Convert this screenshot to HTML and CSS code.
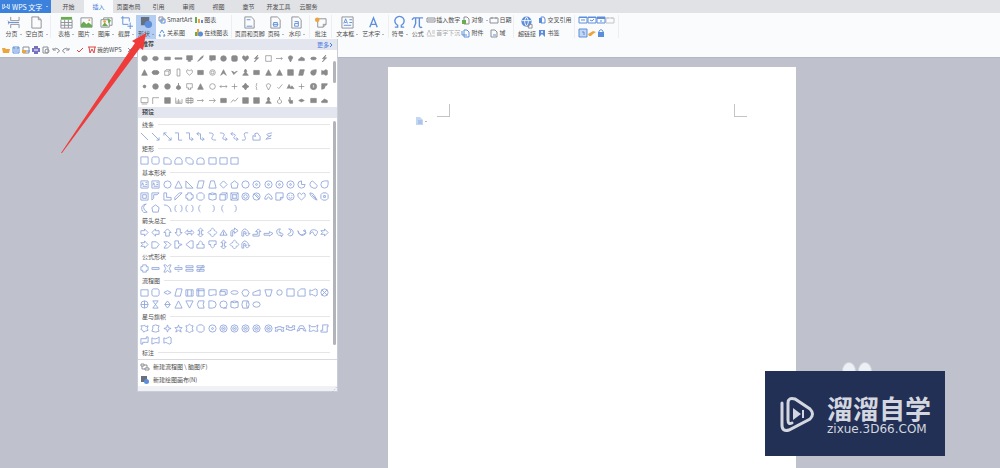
FILE: index.html
```html
<!DOCTYPE html>
<html lang="zh-CN">
<head>
<meta charset="utf-8">
<title>WPS 文字</title>
<link rel="stylesheet" href="styles.css">
</head>
<body>
<div class="app">
  <header class="top">
    <nav class="tabs">
      <button class="brand"><svg class="brand-logo" viewBox="0 0 10 8"><path d="M1 1v6l4-3 4 3V1M3 1v3M7 1v3"/></svg><span>WPS 文字</span><i class="caret"></i></button>
      <button class="tab">开始</button>
      <button class="tab active">插入</button>
      <button class="tab">页面布局</button>
      <button class="tab">引用</button>
      <button class="tab">审阅</button>
      <button class="tab">视图</button>
      <button class="tab">章节</button>
      <button class="tab">开发工具</button>
      <button class="tab">云服务</button>
    </nav>

    <div class="ribbon">
      <div class="group wide">
        <button class="big"><svg viewBox="0 0 14 14"><path class="g" d="M4 1v4h9V1M4 13V9h9v4"/><path class="b" d="M1 7h12M1 5l2 2-2 2"/></svg><span>分页<i class="caret"></i></span></button>
        <button class="big"><svg viewBox="0 0 14 14"><path class="g" d="M2 1h7l3 3v9H2zM9 1v3h3"/></svg><span>空白页<i class="caret"></i></span></button>
      </div>
      <div class="group media">
        <button class="big"><svg viewBox="0 0 14 14"><path class="gr" d="M1 1h12v3H1z"/><path class="g" d="M1 4v9h12V4M1 7h12M1 10h12M5 4v9M9 4v9"/></svg><span>表格<i class="caret"></i></span></button>
        <button class="big"><svg viewBox="0 0 14 14"><path class="g" d="M1 2h12v10H1z"/><path class="gr" d="M1 12V9l3-3 3 3 2-2 4 3v2z"/><circle class="or" cx="10" cy="4.500" r="1"/></svg><span>图片<i class="caret"></i></span></button>
        <button class="big"><svg viewBox="0 0 14 14"><path class="g" d="M1 4h9v8H1zM4 4V2h9v8h-3"/><path class="gr" d="M2 11l3-4 4 4zM8 2l4 3-3 3z"/><circle class="or" cx="5" cy="6" r="1.500"/></svg><span>图库<i class="caret"></i></span></button>
        <button class="big"><svg viewBox="0 0 14 14"><path class="b" d="M3 0v9h6M1 2h9v4M11 7v7M8 11h6"/></svg><span>截屏<i class="caret"></i></span></button>
        <button class="big pressed"><svg viewBox="0 0 14 14"><path class="dk" d="M1 1h9v4L5 10H1z"/><circle class="bl" cx="9" cy="9" r="4"/></svg><span>形状<i class="caret"></i></span></button>
        <div class="stack">
          <button class="small"><svg viewBox="0 0 8 8"><path class="g" d="M1 1h4v4H1z"/><path class="b" d="M3 3h4v4H3z"/></svg>SmartArt</button>
          <button class="small"><svg viewBox="0 0 8 8"><path class="b" d="M2 4l2-3 2 3M6 5l1 2H5M3 7H1l1-2"/></svg>关系图</button>
        </div>
        <div class="stack">
          <button class="small"><svg viewBox="0 0 8 8"><path class="gr" d="M0 1h2v6H0z"/><path class="or" d="M3 3h2v4H3z"/><path class="bl" d="M6 4h2v3H6z"/></svg>图表</button>
          <button class="small"><svg viewBox="0 0 8 8"><path class="gr" d="M0 3h2v4H0z"/><path class="or" d="M2 0h2v7H2z"/><circle class="bl" cx="5.500" cy="5" r="2.500"/></svg>在线图表</button>
        </div>
      </div>
      <div class="group">
        <button class="big w30"><svg viewBox="0 0 14 14"><path class="g" d="M2 1h7l3 3v9H2z"/><path class="b" d="M4 4h4M4 11h6"/></svg><span>页眉和页脚</span></button>
        <button class="big w21"><svg viewBox="0 0 14 14"><path class="g" d="M2 1h7l3 3v9H2z"/><path class="b" d="M5 7h4v4H5zM4 9h6"/></svg><span>页码<i class="caret"></i></span></button>
        <button class="big w21"><svg viewBox="0 0 14 14"><path class="g" d="M2 1h7l3 3v9H2z"/><path class="b" d="M5 6h4v5H5V8h4"/></svg><span>水印<i class="caret"></i></span></button>
      </div>
      <div class="group">
        <button class="big w17"><svg viewBox="0 0 14 14"><path class="g" d="M4 3h9v6l-3 3H4zM13 9h-3v3"/><circle class="or" cx="3.500" cy="4" r="2.500"/></svg><span>批注</span></button>
      </div>
      <div class="group">
        <button class="big w27"><svg viewBox="0 0 14 14"><path class="g" d="M1 1h12v12H1z"/><path class="b" d="M3 8l2-5 2 5M4 7h2M9 4h3M9 7h3M3 10h8"/></svg><span>文本框<i class="caret"></i></span></button>
        <button class="big w27"><svg viewBox="0 0 14 14"><path class="b thick" d="M3 12L7 2l4 10M4 9h6"/></svg><span>艺术字<i class="caret"></i></span></button>
      </div>
      <div class="group symbols">
        <button class="big w19"><svg viewBox="0 0 14 14"><path class="b thick" d="M2 12h3V10A5 5 0 1 1 9 10v2h3"/></svg><span>符号<i class="caret"></i></span></button>
        <button class="big w17"><svg viewBox="0 0 14 14"><path class="b thick" d="M1 4l2-2h10M5 2v6l-2 5M9 2v9q1 2 3 1"/></svg><span>公式</span></button>
        <div class="stack">
          <button class="small"><svg viewBox="0 0 8 8"><path class="g" d="M0 2h8v4H0zM2 3v2M4 3v2M6 3v2"/></svg>插入数字</button>
          <button class="small off" disabled><svg viewBox="0 0 8 8"><path class="g" d="M0 6l2-5 2 5M5 2h3M5 4h3M0 7h8"/></svg>首字下沉</button>
        </div>
        <div class="stack">
          <button class="small"><svg viewBox="0 0 8 8"><path class="g" d="M2 1h3l2 2v5H2z"/><path class="gr" d="M0 4h4v4H0z"/></svg>对象<i class="caret"></i></button>
          <button class="small"><svg viewBox="0 0 8 8"><path class="b" d="M2 1h3l2 2v5H2zM0 2v4h5"/></svg>附件</button>
        </div>
        <div class="stack">
          <button class="small"><svg viewBox="0 0 8 8"><path class="g" d="M0 2h8v5H0zM2 1v2M6 1v2"/></svg>日期</button>
          <button class="small"><svg viewBox="0 0 8 8"><path class="g" d="M1 1h4l2 2v5H1z"/><path class="b" d="M3 6h3"/></svg>域</button>
        </div>
      </div>
      <div class="group">
        <button class="big w21"><svg viewBox="0 0 14 14"><circle class="bl" cx="7" cy="6" r="5.500"/><path class="w" d="M2 5h10M7 1q-4 5 0 10M7 1q4 5 0 10"/><path class="g" d="M7 11h3M9 9h4v4H9z"/></svg><span>超链接</span></button>
        <div class="stack">
          <button class="small"><svg viewBox="0 0 8 8"><path class="bl" d="M1 2h3v5H1z"/><path class="b" d="M3 1h3l1 2v4H3z"/></svg>交叉引用</button>
          <button class="small"><svg viewBox="0 0 8 8"><path class="bl" d="M1 1h6v7L4 5 1 8z"/><circle class="wf" cx="4" cy="3" r="1"/></svg>书签</button>
        </div>
      </div>
      <div class="group controls">
        <button aria-label="文本域"><svg viewBox="0 0 8 8"><path class="b" d="M0 1h8v6H0zM2 4h4"/><path class="bl" d="M0 1h8v1H0z"/></svg></button>
        <button aria-label="复选框"><svg viewBox="0 0 8 8"><path class="b" d="M0 1h8v6H0zM2 4l2 1 2-2"/><path class="bl" d="M0 1h8v1H0z"/></svg></button>
        <button aria-label="下拉框"><svg viewBox="0 0 8 8"><path class="b" d="M0 1h8v6H0zM3 5h2"/><path class="bl" d="M0 1h8v2H0z"/></svg></button>
        <button aria-label="重置" class="off"><svg viewBox="0 0 8 8"><path class="g" d="M0 2h8v5H0zM2 1v2M6 1v2"/></svg></button>
        <button aria-label="底纹"><svg viewBox="0 0 8 8"><path class="lb" d="M0 0h8v8H0z"/><path class="b" d="M0 0h8v8H0zM3 3h2v3"/></svg></button>
        <button aria-label="清除"><svg viewBox="0 0 8 8"><path class="or" d="M0 5l5-3 3 1-3 2-2 2H1z"/></svg></button>
        <button aria-label="锁定"><svg viewBox="0 0 8 8"><path class="bl" d="M1 3h6v5H1z"/><path class="b" d="M2 3V2q2-3 4 0v1"/></svg></button>
      </div>
    </div>

    <div class="quick">
      <button aria-label="打开"><svg viewBox="0 0 8 8"><path class="or" d="M0 2h3l1 1h4L7 7H1z"/></svg></button>
      <button aria-label="保存"><svg viewBox="0 0 8 8"><path class="b" d="M1 1h6v6H1zM2 1v2h4V1M2 5h4"/></svg></button>
      <button aria-label="输出"><svg viewBox="0 0 8 8"><path class="g" d="M1 1h6v6H1z"/><path class="or" d="M0 4h4v3H0z"/><path class="b" d="M4 5h4"/></svg></button>
      <button aria-label="打印"><svg viewBox="0 0 8 8"><path class="vi" d="M2 0h4v2h2v4H6v2H2V6H0V2h2z"/><path class="w" d="M2 4h4"/></svg></button>
      <button aria-label="预览"><svg viewBox="0 0 8 8"><path class="g" d="M1 1h5v6H1z"/><circle class="g" cx="5" cy="5" r="2"/></svg></button>
      <button aria-label="撤销"><svg viewBox="0 0 8 8"><path class="g" d="M1 2v2h3M1 4q2-3 5-1t-1 4"/></svg></button>
      <button aria-label="恢复"><svg viewBox="0 0 8 8"><path class="g" d="M7 2v2H4M7 4Q5 1 2 3t1 4"/></svg></button>
      <button aria-label="便捷" class="mark"><svg viewBox="0 0 8 8"><path class="r" d="M1 4l2 2 4-4"/></svg></button>
      <button class="home"><svg viewBox="0 0 8 8"><path class="r" d="M0 1h8M1 1l1 6 2-4 2 4 1-6"/></svg>我的WPS</button>
      <button aria-label="关闭"><svg viewBox="0 0 8 8"><path class="g" d="M2 2l4 4M6 2L2 6"/></svg></button>
    </div>
  </header>

  <main class="workspace">
    <article class="sheet">
      <div class="corners"><i class="corner left"></i><i class="corner right"></i></div>
      <button class="paste" aria-label="粘贴选项"><svg viewBox="0 0 8 8"><path class="lb" d="M1 0h4l3 3v5H1z"/><path class="b thin" d="M3 4h4M3 6h4"/></svg><i class="caret"></i></button>
    </article>
  </main>

  <section class="menu" aria-label="形状">
    <div class="menu-head"><strong>推荐</strong><a href="#more">更多<svg viewBox="0 0 4 6"><path d="M1 1l2 2-2 2"/></svg></a></div>
    <div class="recommend"><div class="shapes solid" data-shapes="dot oval pill flat screen pencil talk dot round heart bolt square- thin pin cloud flatoval bolt|tri ovalwide cube- phone- heart- rect ring people check2 pawn rect tri tri box para leaf wave|small dot dot drop screen- tri circle- lr plusthin quad brace- pin- check pair plusthin badge quarter|frame- cornerthin box chart globe thin arrowthin rect zig box box pawn drop- hand flatdia rect cloud"></div><i class="thumb"></i></div>
    <div class="menu-head"><strong>预设</strong></div>
    <div class="presets">
      <div class="sections">
        <h3>线条</h3><div class="shapes" data-shapes="line linearrow lineboth elbow elbowarrow elbowboth curve curvearrow curveboth ess free scribble"></div>
        <h3>矩形</h3><div class="shapes" data-shapes="square round snip1 snip2 snipd roundt rectw rectw rectw"></div>
        <h3>基本形状</h3><div class="shapes" data-shapes="textbox textbox circle tri rtri para trap dia penta circle target target target target pie chord tear|framebox corner ell stripe cross octa can cube bevel ring no arc fold smile heart leafline sun|moon penta arcline paren paren lparen rparen lparen rparen"></div>
        <h3>箭头总汇</h3><div class="shapes" data-shapes="right left up down leftright updown quadarrow tri3 bend uturn bentup elbowup curver curvel curveu curved notch|notch homeplate chevron calloutr calloutl calloutu calloutd updown quadarrow uturn"></div>
        <h3>公式形状</h3><div class="shapes" data-shapes="cross minus times divide equal notequal"></div>
        <h3>流程图</h3><div class="shapes" data-shapes="rectw round flatdia para predef internal document multi flatoval hexa manual trapd circlesm square card wave sumx|sumplus collate sort tri merge stored delay seq can direct oval"></div>
        <h3>星与旗帜</h3><div class="shapes" data-shapes="burst burst2 star4 star5 star6 octa target ringstar ringstar ringstar ringstar ringstar ribbon ribbond ribbonc ribbonw scroll|scrollh wave2 wave"></div>
        <h3>标注</h3>
      </div>
      <i class="thumb"></i>
    </div>
    <div class="commands">
      <button><svg viewBox="0 0 8 8"><path class="g" d="M0 1h3v2H0zM3 2h3v3M4 5h4v2H4zM1 3v3h3"/></svg>新建流程图 \ 脑图(F)</button>
      <button><svg viewBox="0 0 8 8"><path class="dk" d="M0 0h6v3L3 6H0z"/><circle class="bl" cx="5.500" cy="5.500" r="2.500"/></svg>新建绘图画布(N)</button>
    </div>
    <div class="grip">⋰</div>
  </section>

  <svg class="pointer" viewBox="0 0 86 122"><path d="M0 121L74 11l-3-2L85 1l-3 17-3-2L1 121z"/></svg>

  <div class="ears"><i></i><i></i></div>
  <aside class="watermark">
    <svg viewBox="0 0 36 36"><path d="M3 7v22q0 7 7 5l21-11q5-5 0-10L16 3Q9 1 9 7v17q0 5 4 3"/><path class="play" d="M14 12l8 6-8 6zM23 14h2v8h-2z"/></svg>
    <div><b>溜溜自学</b><span>zixue.3D66.COM</span></div>
  </aside>
</div>
<script src="shapes.js"></script>
</body>
</html>
```

FILE: styles.css
```css
* { box-sizing: border-box; }
body { margin: 0; font: 6px/8px "Noto Sans CJK SC", "Noto Sans", sans-serif; color: #4c4c4c; }
button { border: 0; padding: 0; margin: 0; background: none; font: inherit; color: inherit; white-space: nowrap; }
svg { display: block; flex: none; fill: none; overflow: visible; }
.app { position: relative; display: flex; flex-direction: column; min-height: 100vh; overflow: hidden; background: #bfc2cd; }

/* icon paints */
.g { stroke: #8b8f96; }
.b { stroke: #5f8fdc; }
.r { stroke: #dd4545; }
.w { stroke: #fff; }
.wf { fill: #fff; }
.gr { fill: #6aaa50; }
.or { fill: #eca53c; }
.bl { fill: #5b8ddb; }
.lb { fill: #c3d6f2; }
.dk { fill: #66707f; }
.vi { fill: #7770bd; }
.thick { stroke-width: 1.500; }
.thin { opacity: .5; }
.caret { display: inline-block; flex: none; margin-left: 2px; border: 1px solid transparent; border-top-color: #777; border-bottom: 0; vertical-align: middle; }

.tabs { display: flex; gap: 1px; height: 13px; background: #e1e2e5; }
.brand { display: flex; align-items: center; gap: 2px; width: 51px; margin-right: 2px; padding: 0 3px 0 2px; background: #3c82dc; color: #fff; font-size: 7px; }
.brand-logo { width: 8px; height: 7px; stroke: #fff; }
.brand .caret { margin-left: auto; border-top-color: #fff; }
.tab { width: 29px; }
.tab.active { background: #fafbfc; color: #3f7edb; }

.ribbon { display: flex; height: 29px; padding-top: 2px; background: #fafbfc; }
.group { display: flex; padding: 0 2px; border-right: 1px solid #eceef1; margin-bottom: 4px; }
.big { display: flex; flex-direction: column; align-items: center; gap: 1px; width: 20px; height: 25px; padding-top: 1px; }
.big svg { width: 13px; height: 13px; }
.big span { display: flex; align-items: center; }
.wide .big { width: 23px; }
.big.w17 { width: 17px; }
.big.w19 { width: 19px; }
.big.w21 { width: 21px; }
.big.w27 { width: 26px; }
.big.w30 { width: 31px; }
.big.pressed { background: #b3cdf3; }
.stack { display: flex; flex-direction: column; gap: 5px; padding: 1px 1px 0; }
.small { display: flex; align-items: center; gap: 1px; height: 8px; }
.small svg, .quick svg, .controls svg { width: 8px; height: 8px; }
.off { opacity: .5; }
.group.media { padding: 0 2px 0 5px; }
.media .stack { padding-left: 2px; }
.group.symbols { padding: 0 1px; }
.group.controls { display: grid; grid-template-columns: repeat(4, 8px); grid-auto-rows: 8px; gap: 5px 1px; padding: 1px 4px 0; }

.quick { display: flex; align-items: center; gap: 2px; height: 16px; padding-left: 2px; background: #fafbfd; border-bottom: 1px solid #b3b7c3; }
.mark { margin-left: 4px; }
.home { display: flex; align-items: center; gap: 1px; margin: 0 2px; }

.workspace { flex: 1; display: flex; padding: 9px 20.400% 0 38.800%; }
.sheet { flex: 1; background: #fff; padding: 37px 49px 0; }
.corners { display: flex; justify-content: space-between; height: 13px; }
.corner { width: 13px; border-bottom: 1px solid #c4c4c4; }
.left { border-right: 1px solid #c4c4c4; }
.right { border-left: 1px solid #c4c4c4; }
.paste { display: flex; align-items: center; margin: 0 0 0 -22px; }
.paste svg { width: 8px; height: 8px; }

.menu { position: absolute; left: 137px; top: 39px; width: 201px; background: #fff; border: 1px solid #c9cdd8; border-top: 0; }
.menu-head { display: flex; justify-content: space-between; height: 11px; padding: 1px 4px; background: #e3e6ee; }
.menu-head a { display: flex; align-items: center; color: #4b7be5; text-decoration: none; }
.menu-head a svg { width: 4px; height: 6px; stroke: #4b7be5; }
.recommend, .presets { display: flex; justify-content: space-between; }
.recommend { padding: 3px 1px 1px 1px; }
.presets { padding-left: 1px; }
.thumb { width: 3px; border-radius: 2px; background: #b2b4ba; }
.recommend .thumb { height: 22px; margin-top: 8px; }
.presets .thumb { margin: 3px 1px 14px 0; }
.shapes { width: 191px; display: grid; gap: 1px 0; }
.recommend .shapes { gap: 3px 0; }
.shape-row { display: grid; grid-template-columns: repeat(17, 1fr); height: 11px; }
.shape-row button { display: grid; place-items: center; }
.shape-row svg { width: 9px; height: 9px; stroke: #93a8da; }
.shape-row .full { stroke-width: 1; }
.solid .shape-row svg { width: 7px; height: 7px; stroke: #8a8a8a; fill: #8a8a8a; }
.solid .shape-row svg.open { fill: none; }
h3 { display: flex; align-items: center; gap: 4px; height: 13px; margin: 0; padding-left: 3px; font-size: 6px; font-weight: 400; }
h3::after { content: ""; flex: 1; border-top: 1px solid #e6e6e8; }
.commands { display: flex; flex-direction: column; border-top: 1px solid #d8dae0; }
.commands button { display: flex; align-items: center; gap: 4px; height: 13px; padding-left: 3px; text-align: left; }
.commands svg { width: 8px; height: 8px; }
.grip { height: 5px; background: #f0f1f4; color: #aaa; font-size: 5px; line-height: 5px; text-align: right; }

.pointer { position: absolute; left: 61px; top: 32px; width: 86px; height: 122px; fill: #f03b3b; }
.ears { position: absolute; left: 842px; top: 362px; display: flex; gap: 2px; }
.ears i { width: 14px; height: 18px; border: 1px solid #d0d4dc; border-radius: 50%; background: #edf0f5; }
.watermark { position: absolute; left: 765px; top: 371px; display: flex; align-items: center; gap: 12px; width: 180px; height: 85px; padding-left: 14px; background: #223056; color: #d4d7df; }
.watermark svg { width: 36px; height: 36px; stroke: #d4d7df; stroke-width: 3; stroke-linecap: round; }
.watermark .play { fill: #d4d7df; stroke: none; }
.watermark div { display: flex; flex-direction: column; }
.watermark b { font-size: 26px; line-height: 30px; font-weight: 700; }
.watermark span { font: 12px/12px "DejaVu Sans", sans-serif; }
```

FILE: shapes.js
```js
const circle = (r, cx = 5, cy = 5) => `M${cx - r} ${cy}a${r} ${r} 0 1 0 ${2 * r} 0a${r} ${r} 0 1 0 ${-2 * r} 0z`;
const paths = {
  dot: circle(4), small: circle(2), circle: circle(4), circlesm: circle(3),
  oval: "M1 5q0-3 4-3t4 3-4 3-4-3z", ovalwide: "M0 5q0-3 5-3t5 3-5 3-5-3zM3 2v6M7 2v6", flatoval: "M1 5q0-2 4-2t4 2-4 2-4-2z",
  pill: "M1 3h8v4H1z", flat: "M0 4h10v2H0z", rect: "M1 2h8v6H1z", rectw: "M1 2h8v7H1z", box: "M1 1h8v8H1z", square: "M1 1h8v8H1z",
  round: "M3 1h4q2 0 2 2v4q0 2-2 2H3q-2 0-2-2V3q0-2 2-2z", screen: "M1 1h8v6H6l1 2H3l1-2H1z", pencil: "M1 9l5-6 3-2-1 3-5 4z",
  talk: "M1 1h8v6H5L3 9V7H1z", heart: "M5 9L1 5q-1-4 2-4l2 2 2-2q3 0 2 4z", bolt: "M7 0L2 5h3L2 10l6-6H5z",
  thin: "M0 5h9M7 3l2 2-2 2", arrowthin: "M0 5h9M6 2l3 3-3 3", pin: "M5 10L3 6Q0 2 5 1q5 1 2 5z", cloud: "M1 8q-1-3 2-3 1-4 4-1 3 0 2 4z",
  tri: "M5 1l4 8H1z", tri3: "M5 2l4 6H1zM5 4v4", rtri: "M1 1l8 8H1z", phone: "M3 0h4v10H3z", cube: "M1 3l2-2h6v6L7 9H1zM1 3h6v6M7 3l2-2",
  ring: circle(4) + circle(2), people: "M1 9l4-8 4 8-4-3z", check2: "M1 3l3 5 5-5-4 2z", pawn: "M5 0l2 3-1 2 3 4H1l3-4-1-2z",
  para: "M3 1h6L7 9H1z", leaf: "M1 5q0-4 8-4 0 8-4 8t-4-4z", wave: "M1 2q2 2 4 0t4 0v6q-2 2-4 0t-4 0z", wave2: "M1 2q4 3 8-1v7q-4-2-8 1z",
  leafline: "M1 1q4 0 5 3l3 5q-3-1-5-3Q1 4 1 1zM3 3l5 5",
  drop: "M5 0v3q4 2 3 5-3 3-6 0-1-3 3-5z", lr: "M0 5h10M2 3L0 5l2 2M8 3l2 2-2 2", plusthin: "M5 1v8M1 5h8", quad: "M5 0l2 3 3 2-3 2-2 3-2-3-3-2 3-2z",
  brace: "M6 0q-2 1-1 4L4 5l1 1q-1 3 1 4", check: "M2 6l2 2 5-6", pair: "M0 8l3-6 3 6M5 8l2-4 3 4z", badge: circle(4.500) + "M4 2h2v5H4z",
  quarter: "M1 1h8q0 3-3 3 0 5-5 5z", frame: "M0 1h10v7H0zM1 10h8", cornerthin: "M1 10V1h9", chart: "M1 1v8h9V3M3 5v4M5 3v6M7 5v4",
  globe: "M0 2h10v6H0zM3 0v10M7 0v10M0 5h10", zig: "M0 8l3-4 3 2 4-5", hand: "M4 0v5L2 4l2 5h4V5H5z", flatdia: "M5 3l4 2-4 2-4-2z",
  line: "M1 1l8 8", linearrow: "M1 1l8 8M9 6v3H6", lineboth: "M1 1l8 8M9 6v3H6M1 4V1h3", elbow: "M1 1h4v8h4", elbowarrow: "M1 1h4v7h4M7 6l2 2-2 2",
  elbowboth: "M1 2h4v6h4M7 6l2 2-2 2M3 0L1 2l2 2", curve: "M1 1q7 0 4 4t4 4", curvearrow: "M1 1q7 0 4 4t4 3M7 6l2 2-2 2", curveboth: "M1 2q7 0 4 3t4 3M7 6l2 2-2 2M3 0L1 2l2 2",
  ess: "M8 1Q2 0 4 4t0 5H1", free: "M1 9V4l3 1-1-3 3-1 3 4v4z", scribble: "M9 1Q1 2 4 4t4 0-6 4l6-1",
  snip1: "M1 2h5l3 3v4H1z", snip2: "M3 2h4l2 3v4H1V5z", snipd: "M1 2h5l3 3v4H4L1 6z", roundt: "M1 9V5q0-3 4-3t4 3v4z",
  textbox: "M1 1h8v8H1zM2 6l1-3 1 3M6 3h2M6 5h2M3 7h5", trap: "M3 1h4l2 8H1z", trapd: "M1 2h8L7 9H3z", dia: "M5 1l4 4-4 4-4-4z", penta: "M5 1l4 3-1 5H2L1 4z",
  target: circle(4) + circle(1), pie: "M5 1q-4 0-4 4t4 4 4-4H5z", chord: "M4 1Q1 2 1 5t4 4 4-3z", tear: "M9 1v4q0 4-4 4T1 5t4-4z",
  framebox: "M1 1h8v8H1zM3 3h4v4H3z", corner: "M1 9V1h8L7 3H3v4z", ell: "M1 1h3v5h5v3H1z", stripe: "M1 9V6l5-5h3z",
  cross: "M3 1h4v2h2v4H7v2H3V7H1V3h2z", octa: "M3 1h4l2 2v4L7 9H3L1 7V3z", can: "M1 2q4-2 8 0v6q-4 2-8 0zM1 2q4 2 8 0",
  bevel: "M1 1h8v8H1zM3 3h4v4H3zM1 1l2 2M9 1L7 3M1 9l2-2M9 9L7 7", no: circle(4) + "M2 2l6 6M4 2l4 4", arc: "M1 8V6q4-8 8 0v2H7q-2-5-4 0z",
  fold: "M1 1h8v5L6 9H1zM9 6H6v3", smile: circle(4) + "M3 4h1M6 4h1M3 6q2 2 4 0", sun: "M3 1h4l2 2v4L7 9H3L1 7V3zM4 4h2v2H4z",
  moon: "M7 0Q1 1 2 6t6 3Q4 7 4 4t3-4z", arcline: "M1 1q7 0 8 8", paren: "M3 1Q1 2 1 5t2 4M7 1q2 1 2 4T7 9", lparen: "M5 1Q3 2 3 5t2 4", rparen: "M5 1q2 1 2 4T5 9",
  right: "M1 3h4V1l4 4-4 4V7H1z", left: "M9 3H5V1L1 5l4 4V7h4z", up: "M3 9V5H1l4-4 4 4H7v4z", down: "M3 1v4H1l4 4 4-4H7V1z",
  leftright: "M0 5l3-3v2h4V2l3 3-3 3V6H3v2z", updown: "M5 0l3 3H6v4h2l-3 3-3-3h2V3H2z", quadarrow: "M5 0l2 2v1h1l2 2-2 2H7v1l-2 2-2-2V7H2L0 5l2-2h1V2z",
  bend: "M1 9V4q0-2 4-2V0l4 3-4 3V4H3v5z", uturn: "M1 9V4q3-6 7 0v2h2L7 9 4 6h2q-1-3-3-2v5z", bentup: "M1 7h5V4H4l3-3 3 3H8v5H1z", elbowup: "M0 6h6V4l4 2-4 3V8H0z",
  curver: "M6 1Q1 1 2 5t5 3v2l2-3-3-2v1Q3 5 6 1z", curvel: "M3 1q5 0 5 4T4 9L2 7l3-2Q7 3 3 1z", curveu: "M1 3q1 6 6 4t0-4l2-1 1 4Q4 12 1 3z", curved: "M1 7q0-6 5-5t3 4L7 9 5 6q-1-4-4 1z",
  notch: "M1 3h4V1l4 4-4 4V7H1l2-2z", homeplate: "M1 2h5l3 3-3 4H1z", chevron: "M1 2h4l4 3-4 4H1l3-4z", calloutr: "M1 1h4v3l4 1-4 2v2H1z", calloutl: "M9 1H6L1 5l5 4h3z",
  calloutu: "M1 9V5h2V3l2-2 2 2v2h2v4z", calloutd: "M1 1h8v4H7v2L5 9 3 7V5H1z", minus: "M1 4h8v2H1z", times: "M1 1h2l2 2 2-2h2L7 5l2 4H7L5 7 3 9H1l2-4z",
  divide: "M1 4h8v2H1zM4 2h2M4 8h2", equal: "M1 2h8v2H1zM1 6h8v2H1z", notequal: "M1 2h8v2H1zM1 6h8v2H1zM3 9l5-8",
  predef: "M1 2h8v7H1zM3 2v7M7 2v7", internal: "M1 1h8v8H1zM3 1v8M1 3h8", document: "M1 2h8v6q-2-1-4 0t-4 0z", multi: "M1 4h6v4H1zM2 4V2h7v5H7M1 4l2-2",
  hexa: "M3 2h4l2 3-2 4H3L1 5z", manual: "M1 5l8-3v6H1z", card: "M4 1h5v8H1V4z", sumx: circle(4) + "M2 2l6 6M8 2L2 8", sumplus: circle(4) + "M5 1v8M1 5h8",
  collate: "M2 1h6L2 9h6z", sort: "M5 1l3 4-3 4-3-4zM2 5h6", merge: "M1 1h8L5 9z", stored: "M3 1h6Q7 5 9 9H3Q0 5 3 1z", delay: "M1 1h4q4 0 4 4T5 9H1z",
  seq: circle(4) + "M5 9h4", direct: "M2 1h6q2 4 0 8H2Q0 5 2 1zM7 1q-2 4 0 8", burst: "M5 1l1 2 3-1-1 3 1 2-3 1-2 1-1-2-2-1 1-2-1-2h3z", burst2: "M2 2l3-1 4 1-1 3 1 3-4 1-4-1 1-3z",
  star4: "M5 1l1 3 3 1-3 1-1 3-1-3-3-1 3-1z", star5: "M5 1l1 3h3L7 6l1 3-3-2-3 2 1-3-2-2h3z", star6: "M5 0l2 2h2L8 5l1 3H7l-2 2-2-2H1l1-3-1-3h2z",
  ringstar: circle(4) + circle(2) + "M4 5h2", ribbon: "M0 4h3V3h4v1h3L9 6l1 2H7V6H3v2H0l1-2z", ribbond: "M0 2h3v2h4V2h3L9 4l1 2H7v1H3V6H0l1-2z",
  ribbonc: "M0 8l3-6h4l3 6-3-1V5H3v2z", ribbonw: "M0 1l3 2h4l3-2-1 4 1 3H7L5 7 3 8H0l1-3z", scroll: "M3 1h6v2H8v6H1V7h2z", scrollh: "M1 3h6V1h2v6H3v2H1z"
};
const openShapes = ["thin", "arrowthin", "lr", "plusthin", "check", "cornerthin", "chart", "globe", "zig", "ring"];

for (const box of document.querySelectorAll(".shapes")) {
  box.innerHTML = box.dataset.shapes.split("|").map(row =>
    `<div class="shape-row">${row.split(" ").map(item => {
      const name = item.replace("-", "");
      const open = item.endsWith("-") || openShapes.includes(name);
      return `<button aria-label="${name}"><svg class="${open ? "open" : "full"}" viewBox="0 0 10 10"><path fill-rule="evenodd" d="${paths[name]}"/></svg></button>`;
    }).join("")}</div>`).join("");
}
```
